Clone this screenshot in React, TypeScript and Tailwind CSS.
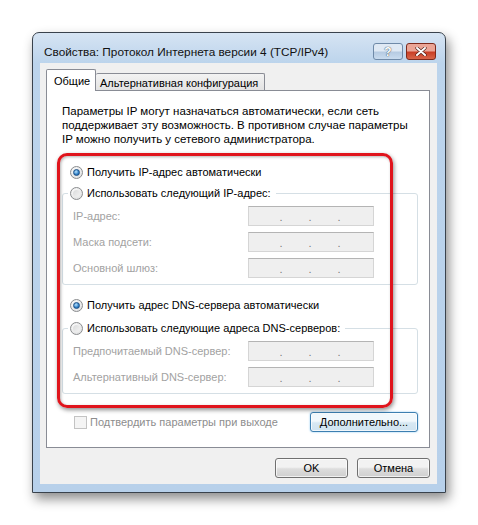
import type { ReactNode } from 'react';

const font = { fontFamily: '"Liberation Sans", Arial, sans-serif' };

function Radio({ checked }: { checked?: boolean }) {
  return (
    <span className="flex h-[13px] w-[13px] shrink-0 items-center justify-center rounded-full border border-[#8a8c8e] bg-[radial-gradient(circle_at_40%_35%,#ffffff,#d8d9da)]">
      {checked ? (
        <span className="h-[7px] w-[7px] rounded-full border border-[#1c4f85] bg-[radial-gradient(circle_at_40%_35%,#b8e4ff,#2c7cc4_60%,#154f8c)]" />
      ) : (
        <span className="h-[7px] w-[7px] rounded-full bg-[linear-gradient(135deg,#dadbdc,#f3f3f3)]" />
      )}
    </span>
  );
}

function IpBox() {
  return (
    <div className="flex h-[20px] w-[126px] items-end justify-center gap-[26px] border border-[#d5d5d5] border-t-[#b4b4b4] bg-[#efefef] pb-[2px] pr-[2px] text-[11px] leading-[11px] text-[#7a7a7a]">
      <span>.</span>
      <span>.</span>
      <span>.</span>
    </div>
  );
}

function Field({ label }: { label: string }) {
  return (
    <div className="flex h-[20px] items-center pl-[10px]">
      <span className="w-[175px] text-[#a2a2a2]">{label}</span>
      <IpBox />
    </div>
  );
}

function GroupBox({ header, children }: { header: ReactNode; children: ReactNode }) {
  return (
    <div className="rounded-[3px] border border-[#d5dfe5] pb-[6px]">
      <div className="-mt-[11px] ml-[5px] flex h-[20px] w-fit items-center gap-[4px] bg-white px-[2px] pr-[5px]">
        {header}
      </div>
      <div className="mt-[3px] flex flex-col gap-[6px]">{children}</div>
    </div>
  );
}

function Button({ children, focused }: { children: ReactNode; focused?: boolean }) {
  return (
    <div
      className={
        focused
          ? 'flex h-[20px] items-center justify-center rounded-[3px] border border-[#3c7fb1] bg-[linear-gradient(#f1f8fc_45%,#d7e8f3_55%,#cfe3f0)] shadow-[inset_0_0_0_1px_rgba(255,255,255,0.7),0_0_2px_#7ec3ef]'
          : 'flex h-[20px] items-center justify-center rounded-[3px] border border-[#707070] bg-[linear-gradient(#f2f2f2_45%,#dddddd_55%,#cfcfcf)] shadow-[inset_0_0_0_1px_rgba(255,255,255,0.7)]'
      }
    >
      {children}
    </div>
  );
}

export default function App() {
  return (
    <div className="relative h-[525px] w-[478px] overflow-hidden whitespace-nowrap bg-white pl-[32px] pt-[32px] text-[11px] leading-[14px] text-black" style={font}>
      <div className="flex h-[461px] w-[414px] flex-col rounded-t-[7px] border border-[#39424c] bg-[linear-gradient(#d6e4f3,#bcd4ec_30px,#b7d0ea)] px-[7px] pb-[8px] pr-[8px] shadow-[3px_6px_12px_rgba(0,0,0,0.45)]">
        {/* title bar */}
        <div className="flex h-[30px] items-center justify-between pl-[4px] pr-[1px] pt-[7px]">
          <span className="text-[11.8px] text-[#111]">Свойства: Протокол Интернета версии 4 (TCP/IPv4)</span>
          <div className="flex gap-[3px]">
            <div className="flex h-[17px] w-[30px] items-center justify-center rounded-[3px] border border-[#6f8aa8] bg-[linear-gradient(#dfe9f4_45%,#b6cbe2_55%,#c9dcef)] text-[12px] font-bold leading-none text-white [text-shadow:0_0_1px_#3b4a5c,0_0_1px_#3b4a5c]">
              ?
            </div>
            <div className="flex h-[17px] w-[30px] items-center justify-center rounded-[3px] border border-[#7e2a1c] bg-[linear-gradient(#eba596_45%,#c93f26_55%,#d8664a)]">
              <svg width="12" height="9" viewBox="0 0 12 9">
                <path d="M2 1 L10 8 M10 1 L2 8" stroke="#4a1a12" strokeWidth="3.2" strokeLinecap="round" />
                <path d="M2 1 L10 8 M10 1 L2 8" stroke="#ffffff" strokeWidth="2" strokeLinecap="round" />
              </svg>
            </div>
          </div>
        </div>

        {/* client area */}
        <div className="flex flex-1 flex-col bg-[#f0f0f0] pl-[6px] pr-[7px] pt-[6px]">
          <div className="flex h-[21px] items-end">
            <div className="relative z-10 -mb-[1px] flex h-[22px] w-[50px] items-start rounded-t-[2px] border border-b-0 border-[#898c95] bg-white pl-[7px] pt-[4px]">
              Общие
            </div>
            <div className="flex h-[17px] w-[169px] items-center rounded-t-[2px] border border-b-0 border-l-0 border-[#898c95] bg-[linear-gradient(#f3f3f3,#e3e3e3)] pl-[4px] pt-[1px]">
              Альтернативная конфигурация
            </div>
          </div>

          <div className="flex h-[358px] flex-col border border-[#898c95] bg-white pl-[15px] pr-[11px] pt-[13px]">
            <p className="text-[11.5px]">
              Параметры IP могут назначаться автоматически, если сеть
              <br />
              поддерживает эту возможность. В противном случае параметры
              <br />
              IP можно получить у сетевого администратора.
            </p>

            <div className="mt-[16px] flex h-[20px] items-center gap-[4px] pl-[8px]">
              <Radio checked />
              <span>Получить IP-адрес автоматически</span>
            </div>

            <div className="mt-[11px]">
              <GroupBox
                header={
                  <>
                    <Radio />
                    <span>Использовать следующий IP-адрес:</span>
                  </>
                }
              >
                <Field label="IP-адрес:" />
                <Field label="Маска подсети:" />
                <Field label="Основной шлюз:" />
              </GroupBox>
            </div>

            <div className="mt-[10px] flex h-[20px] items-center gap-[4px] pl-[8px]">
              <Radio checked />
              <span>Получить адрес DNS-сервера автоматически</span>
            </div>

            <div className="mt-[13px]">
              <GroupBox
                header={
                  <>
                    <Radio />
                    <span>Использовать следующие адреса DNS-серверов:</span>
                  </>
                }
              >
                <Field label="Предпочитаемый DNS-сервер:" />
                <Field label="Альтернативный DNS-сервер:" />
              </GroupBox>
            </div>

            <div className="mt-[18px] flex h-[20px] items-center justify-between">
              <div className="flex items-center gap-[3px] pl-[12px]">
                <span className="h-[13px] w-[13px] border border-[#c3c3c3] bg-[#f4f4f4]" />
                <span className="text-[#8d8d8d]">Подтвердить параметры при выходе</span>
              </div>
              <div className="w-[108px]">
                <Button focused>Дополнительно...</Button>
              </div>
            </div>
          </div>

          <div className="mt-[10px] flex justify-end gap-[9px]">
            <div className="w-[73px]">
              <Button>OK</Button>
            </div>
            <div className="w-[73px]">
              <Button>Отмена</Button>
            </div>
          </div>
        </div>
      </div>

      {/* red highlight annotation */}
      <div className="pointer-events-none absolute left-[57px] top-[153px] h-[255px] w-[336px] rounded-[10px] border-[3px] border-[#e0141c] shadow-[1px_2px_4px_rgba(0,0,0,0.45),inset_1px_1px_3px_rgba(0,0,0,0.3)]" />
    </div>
  );
}
